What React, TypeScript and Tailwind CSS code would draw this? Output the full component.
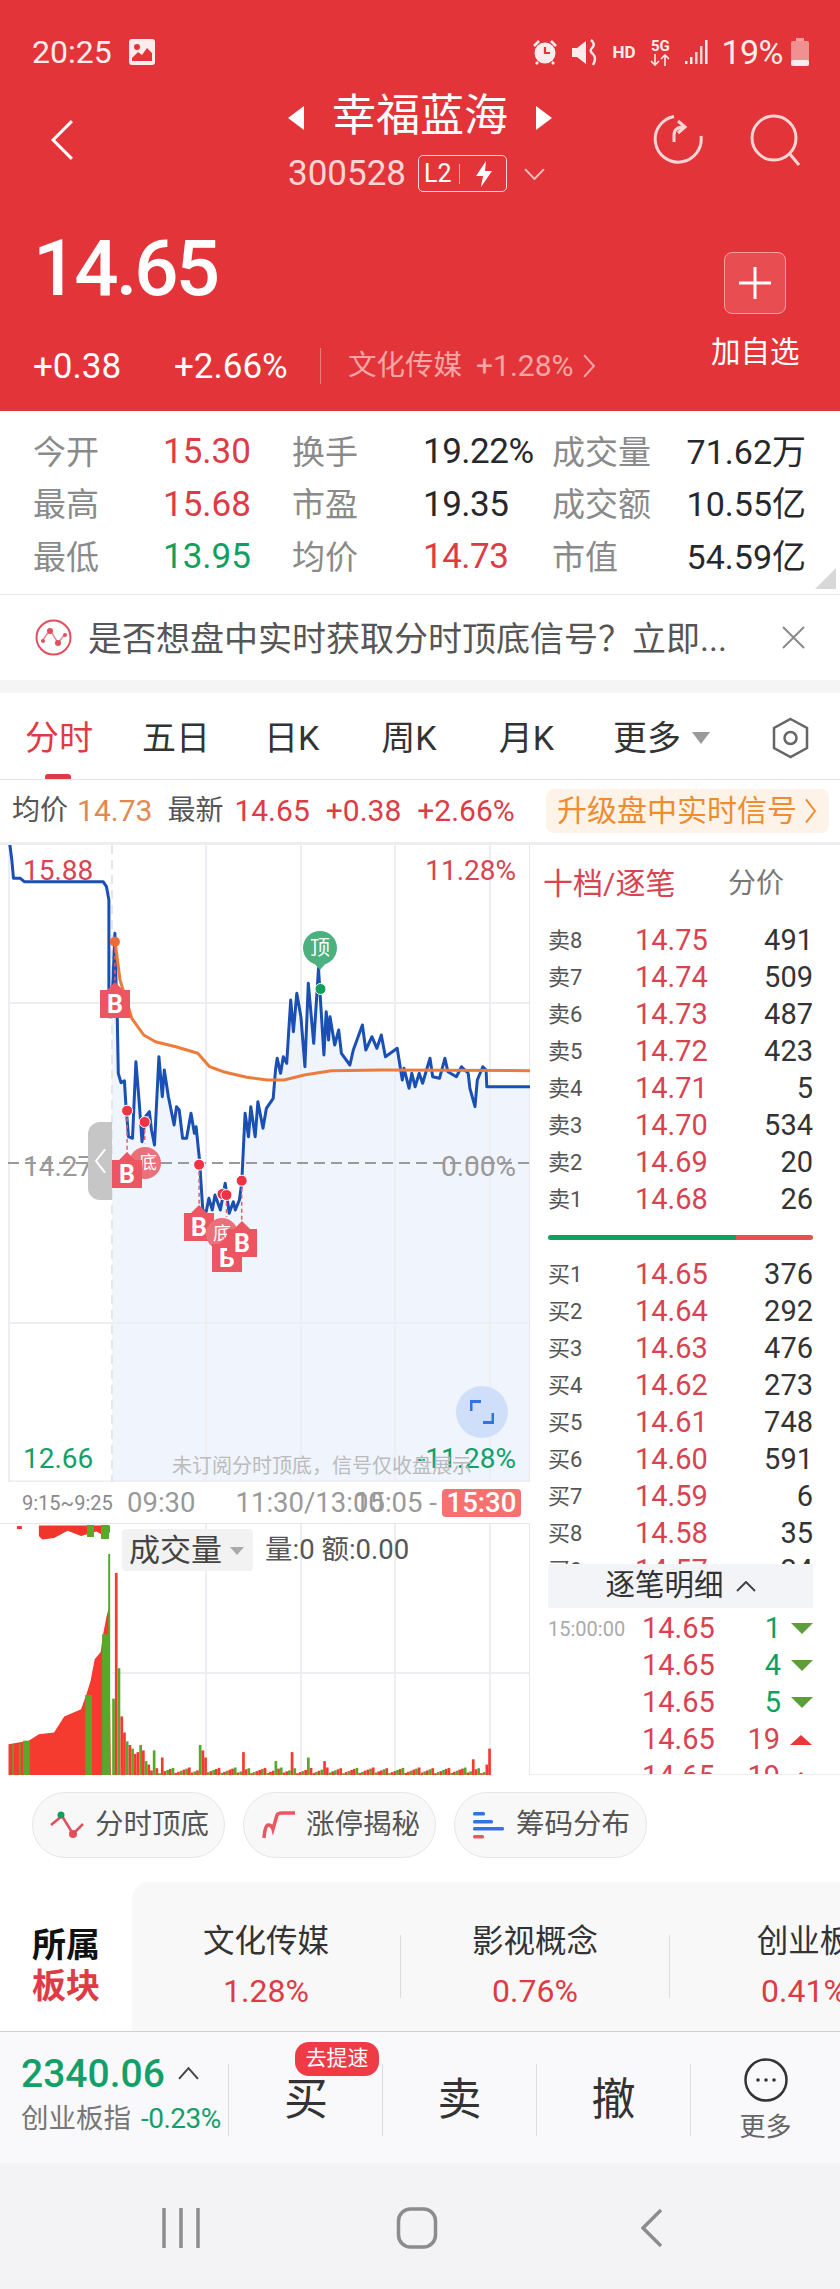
import React from 'react';

// zoomed chart coordinates -> page pixels
const cx = (x: number) => (x / 2.958).toFixed(1);
const cy = (y: number) => (840 + y / 3).toFixed(1);
const vy = (y: number) => (1220 + y / 2.8).toFixed(1);
const pts = (list: number[][]) => list.map(([x, y]) => `${cx(x)},${cy(y)}`).join(' ');
const vpts = (list: number[][]) => list.map(([x, y]) => `${cx(x)},${vy(y)}`).join(' ');

const PRICE_LINE = [
  [28, 5], [35, 60], [40, 115], [60, 115], [72, 125], [305, 125], [315, 140], [322, 180], [322, 530], [330, 530],
  [340, 280], [343, 430], [347, 540], [350, 700], [358, 728], [368, 722], [372, 790], [380, 890], [392, 895], [402, 665],
  [412, 790], [420, 905], [430, 830], [442, 815], [448, 870], [457, 915], [470, 650], [480, 770], [486, 690], [498, 770],
  [515, 855], [522, 800], [530, 810], [540, 895], [552, 895], [565, 820], [575, 880], [580, 860], [590, 960], [600, 1110],
  [610, 1115], [618, 1075], [628, 1110], [636, 1065], [652, 1110], [666, 1030], [678, 1120], [690, 1085], [696, 1110], [708, 1080],
  [715, 1030], [725, 820], [735, 890], [742, 800], [755, 890], [763, 785], [778, 865], [788, 805], [808, 775], [815, 690],
  [820, 655], [830, 700], [838, 650], [848, 670], [860, 480], [868, 575], [878, 460], [890, 530], [902, 680], [912, 430],
  [928, 610], [942, 385], [958, 645], [965, 515], [972, 600], [976, 530], [990, 615], [1002, 570], [1010, 640], [1035, 675],
  [1045, 630], [1072, 555], [1082, 630], [1100, 590], [1115, 625], [1128, 585], [1140, 650], [1175, 625], [1190, 720], [1195, 685],
  [1210, 745], [1218, 700], [1228, 740], [1240, 700], [1250, 730], [1272, 655], [1280, 710], [1300, 715], [1316, 655], [1325, 695],
  [1350, 710], [1365, 680], [1385, 700], [1390, 745], [1405, 800], [1412, 720], [1428, 680], [1438, 690], [1440, 740], [1568, 740],
];
const AVG_LINE = [
  [340, 300], [355, 420], [390, 535], [425, 585], [460, 605], [520, 620], [585, 640], [620, 680], [660, 695], [730, 712],
  [790, 720], [840, 720], [900, 705], [980, 692], [1130, 690], [1568, 692],
];
const AUCTION = [
  [25, 1555], [25, 1468], [85, 1458], [115, 1440], [160, 1435], [190, 1390], [240, 1370], [255, 1330], [268, 1290],
  [280, 1230], [298, 1210], [305, 1160], [315, 1110], [322, 1085], [328, 1555],
];
const AUCTION_TOP = [
  [115, 855], [325, 855], [325, 875], [300, 880], [285, 872], [240, 885], [200, 870], [160, 890], [125, 895], [115, 885],
];
const EARLY_BARS = [215, 567, 300, 165, 120, 95, 85, 75, 60, 65, 85, 70, 40, 30];
const SPIKES: Record<number, number> = {
  15: 70, 18: 50, 32: 85, 33: 70, 34: 50, 48: 65, 60: 40, 66: 65, 72: 50, 78: 40, 133: 45, 138: 30, 139: 75,
};
const VOL_BARS = Array.from({ length: 140 }, (_, i) => ({
  x: 332 + i * 8,
  h: i < EARLY_BARS.length ? EARLY_BARS[i] : SPIKES[i] ?? 6 + ((i * 37) % 17),
  up: (i * 13) % 5 >= 2,
}));

const MARKER_LINES = [
  [340, 305, 450], [376, 812, 950], [428, 846, 910], [589, 974, 1120], [670, 1065, 1130], [715, 1022, 1160],
];
const RED_DOTS = [[376, 812], [428, 846], [589, 974], [658, 1062], [670, 1065], [715, 1022]];

const SELLS = [
  ['卖8', '14.75', '491'], ['卖7', '14.74', '509'], ['卖6', '14.73', '487'], ['卖5', '14.72', '423'],
  ['卖4', '14.71', '5'], ['卖3', '14.70', '534'], ['卖2', '14.69', '20'], ['卖1', '14.68', '26'],
];
const BUYS = [
  ['买1', '14.65', '376'], ['买2', '14.64', '292'], ['买3', '14.63', '476'], ['买4', '14.62', '273'], ['买5', '14.61', '748'],
  ['买6', '14.60', '591'], ['买7', '14.59', '6'], ['买8', '14.58', '35'], ['买9', '14.57', '24'],
];
const TICKS = [
  { time: '15:00:00', vol: '1', up: false },
  { time: '', vol: '4', up: false },
  { time: '', vol: '5', up: false },
  { time: '', vol: '19', up: true },
  { time: '', vol: '19', up: true },
];
const STATS = [
  ['今开', '15.30', 'text-[#DE3B45]', '换手', '19.22%', 'text-[#26282C]', '成交量', '71.62万'],
  ['最高', '15.68', 'text-[#DE3B45]', '市盈', '19.35', 'text-[#26282C]', '成交额', '10.55亿'],
  ['最低', '13.95', 'text-[#0FA060]', '均价', '14.73', 'text-[#DE3B45]', '市值', '54.59亿'],
];

function BTag({ className }: { className: string }) {
  return (
    <div className={`absolute flex h-[28px] w-[30px] items-center justify-center bg-[#EC5562] text-[25px] font-bold leading-none text-white ${className}`}>
      <span className="absolute -top-[8px] left-[7px] h-0 w-0 border-x-[8px] border-b-[8px] border-x-transparent border-b-[#EC5562]" />
      B
    </div>
  );
}

function OrderRow({ row }: { row: string[] }) {
  return (
    <div className="flex h-[37px] shrink-0 items-center">
      <span className="w-[87px] text-[22px] text-[#555]">{row[0]}</span>
      <span className="text-[29px] text-[#D94350]">{row[1]}</span>
      <span className="flex-1 text-right text-[29px] text-[#333]">{row[2]}</span>
    </div>
  );
}

function Chevron({ className, dir = 'left', color = 'white', sw = 3 }: { className: string; dir?: string; color?: string; sw?: number }) {
  const points = dir === 'left' ? '20,2 2,20 20,38' : dir === 'right' ? '2,2 20,20 2,38' : dir === 'up' ? '2,20 20,2 38,20' : '2,2 20,20 38,2';
  const box = dir === 'left' || dir === 'right' ? '0 0 22 40' : '0 0 40 22';
  return (
    <svg className={className} viewBox={box} preserveAspectRatio="none" fill="none">
      <polyline points={points} stroke={color} strokeWidth={sw} vectorEffect="non-scaling-stroke" />
    </svg>
  );
}

function StatusIcons() {
  return (
    <div className="flex items-center">
      <svg className="ml-0 h-[26px] w-[26px]" viewBox="0 0 26 26">
        <circle cx="13" cy="14" r="10.5" fill="#FDECEC" />
        <path d="M2 7 L7 2 M24 7 L19 2 M6 23 L4 25 M20 23 L22 25" stroke="#FDECEC" strokeWidth="2.5" />
        <path d="M13 8 V14 H18" stroke="#E33539" strokeWidth="2.2" fill="none" />
      </svg>
      <svg className="ml-[13px] h-[27px] w-[27px]" viewBox="0 0 27 27">
        <path d="M1 9 H6 L15 2 V25 L6 18 H1 Z" fill="#FDECEC" />
        <path d="M20 1 Q25 5 21 9 Q18 12 22 15 Q26 19 22 26" stroke="#FDECEC" strokeWidth="2.4" fill="none" />
      </svg>
      <span className="ml-[14px] w-[24px] text-[17px] font-bold leading-none text-[#FDECEC]">HD</span>
      <div className="ml-[12px] flex w-[24px] flex-col items-center">
        <span className="text-[15px] font-bold leading-[15px] text-[#FDECEC]">5G</span>
        <svg className="h-[12px] w-[22px]" viewBox="0 0 22 12" fill="none" stroke="#FDECEC" strokeWidth="1.6">
          <path d="M6 0 V11 M2 7 L6 11 L10 7 M16 12 V1 M12 5 L16 1 L20 5" />
        </svg>
      </div>
      <svg className="ml-[13px] h-[26px] w-[24px]" viewBox="0 0 24 26" fill="#FDECEC">
        <rect x="0" y="22" width="2.5" height="3" />
        <rect x="5" y="18" width="2.5" height="7" />
        <rect x="10" y="13" width="2.5" height="12" opacity="0.85" />
        <rect x="15" y="7" width="2.5" height="18" opacity="0.85" />
        <rect x="20" y="1" width="2.5" height="24" />
      </svg>
      <span className="ml-[12px] text-[34px] leading-none tracking-[-0.5px] text-[#FDECEC]">19%</span>
      <svg className="ml-[8px] h-[28px] w-[18px]" viewBox="0 0 18 28">
        <rect x="5" y="0" width="8" height="3" fill="#F0A0A0" />
        <rect x="0" y="3" width="18" height="25" rx="2" fill="#F09090" />
        <rect x="0" y="22" width="18" height="6" rx="2" fill="#FDECEC" />
      </svg>
    </div>
  );
}

function Header() {
  return (
    <header className="h-[411px] shrink-0 bg-[#E33539] text-white">
      <div className="flex h-[104px] items-center justify-between pl-[32px] pr-[31px]">
        <div className="flex items-center">
          <span className="text-[32px] leading-none text-[#FDECEC]">20:25</span>
          <svg className="ml-[17px] h-[26px] w-[26px]" viewBox="0 0 26 26">
            <rect width="26" height="26" rx="3" fill="#FDECEC" />
            <circle cx="8" cy="8" r="3" fill="#E33539" />
            <path d="M3 22 L3 19 L9 13 L13 16 L18 9 L23 14 L23 22 Z" fill="#E33539" />
          </svg>
        </div>
        <StatusIcons />
      </div>
      <div className="flex h-[96px] items-start">
        <div className="flex w-[288px] pl-[51px] pt-[15px]">
          <Chevron className="h-[42px] w-[23px]" sw={3} />
        </div>
        <div className="flex w-[264px] flex-col items-center">
          <div className="flex h-[26px] w-full items-center justify-between leading-none">
            <svg className="mt-[2px] h-[24px] w-[16px]" viewBox="0 0 16 24"><path d="M16 0 V24 L0 12 Z" fill="white" /></svg>
            <span className="-mt-[2px] text-[44px] leading-none">幸福蓝海</span>
            <svg className="mt-[2px] h-[24px] w-[16px]" viewBox="0 0 16 24"><path d="M0 0 V24 L16 12 Z" fill="white" /></svg>
          </div>
          <div className="mt-[25px] flex w-full items-center">
            <span className="text-[35px] leading-none text-[#FBD5D5]">300528</span>
            <div className="ml-[12px] flex h-[37px] w-[89px] items-center rounded-[5px] border border-[#FBD5D5] pl-[5px]">
              <span className="w-[35px] text-[25px] leading-none">L2</span>
              <span className="h-[20px] w-px bg-[#F6B5B5]" />
              <svg className="ml-[15px] h-[26px] w-[18px]" viewBox="0 0 18 26"><path d="M11 0 L1 15 H8 L6 26 L17 10 H10 Z" fill="white" /></svg>
            </div>
            <Chevron dir="down" color="#F9BDBD" sw={2} className="ml-[17px] h-[12px] w-[21px]" />
          </div>
        </div>
        <div className="flex flex-1 pl-[100px] pt-[10px]">
          <svg className="h-[50px] w-[52px]" viewBox="0 0 52 50" fill="none" stroke="#FBD5D5" strokeWidth="3">
            <path d="M22 2.5 A23 23 0 1 0 49 22" />
            <path d="M22 28 V21 Q22 13 32 13 M26 7 L33 13 L26 19" />
          </svg>
          <svg className="ml-[46px] h-[52px] w-[52px]" viewBox="0 0 52 52" fill="none" stroke="#FBD5D5" strokeWidth="3">
            <circle cx="24" cy="24" r="22" />
            <path d="M39 39 L49 51" />
          </svg>
        </div>
      </div>
      <div className="flex h-[211px]">
        <div className="w-[724px] pl-[33px]">
          <div className="mt-[26px] text-[78px] font-medium leading-[86px] tracking-[-3px]">14.65</div>
          <div className="mt-[36px] flex h-[36px] items-center">
            <span className="w-[141px] text-[35px] leading-none">+0.38</span>
            <span className="w-[146px] text-[35px] leading-none">+2.66%</span>
            <span className="h-[36px] w-px bg-[#EE7A7C]" />
            <span className="ml-[27px] text-[28.5px] leading-none text-[#F6A6A6]">文化传媒</span>
            <span className="ml-[14px] text-[30px] leading-none text-[#F6A6A6]">+1.28%</span>
            <Chevron dir="right" color="#F6A6A6" sw={2} className="ml-[9px] h-[24px] w-[12px]" />
          </div>
        </div>
        <div className="flex flex-1 flex-col pt-[52px]">
          <div className="flex h-[62px] w-[62px] items-center justify-center rounded-[8px] border border-[#F2A0A2] bg-[#E74D51]">
            <svg className="h-[32px] w-[32px]" viewBox="0 0 32 32"><path d="M16 0 V32 M0 16 H32" stroke="white" strokeWidth="3" /></svg>
          </div>
          <span className="-ml-[13px] mt-[24px] whitespace-nowrap text-[29.5px] leading-none">加自选</span>
        </div>
      </div>
    </header>
  );
}

function Stats() {
  return (
    <section className="relative h-[184px] shrink-0 border-b border-[#E8E8E8] pt-[15px]">
      {STATS.map((r) => (
        <div key={r[0]} className="flex h-[52.5px] items-center pl-[33px] pr-[34px]">
          <span className="w-[130px] text-[33px] text-[#8A8A8A]">{r[0]}</span>
          <span className={`w-[129px] text-[35px] ${r[2]}`}>{r[1]}</span>
          <span className="w-[131px] text-[33px] text-[#8A8A8A]">{r[3]}</span>
          <span className={`w-[129px] whitespace-nowrap text-[35px] tracking-[-0.5px] ${r[5]}`}>{r[4]}</span>
          <span className="w-[110px] text-[33px] text-[#8A8A8A]">{r[6]}</span>
          <span className="flex-1 whitespace-nowrap text-right text-[34px] text-[#26282C]">{r[7]}</span>
        </div>
      ))}
      <span className="absolute bottom-[5px] right-[4px] h-0 w-0 border-b-[21px] border-l-[21px] border-b-[#D8D8D8] border-l-transparent" />
    </section>
  );
}

function Banner() {
  return (
    <section className="flex h-[85px] shrink-0 items-center pl-[35px] pr-[35px]">
      <svg className="h-[37px] w-[37px]" viewBox="0 0 37 37" fill="none">
        <circle cx="18.5" cy="18.5" r="17" stroke="#E0505C" strokeWidth="2" />
        <path d="M7 22 L15 11 L23 24 L30 15" stroke="#E98A92" strokeWidth="1.5" />
        <circle cx="15" cy="12" r="3" fill="#E0505C" />
        <circle cx="23" cy="24" r="3" fill="#E0505C" />
        <circle cx="8" cy="22" r="2" fill="#E0505C" />
        <circle cx="30" cy="16" r="2" fill="#E0505C" />
      </svg>
      <span className="ml-[16px] mt-[3px] flex-1 whitespace-nowrap text-[34px] leading-none text-[#555]">是否想盘中实时获取分时顶底信号？立即...</span>
      <svg className="h-[23px] w-[23px]" viewBox="0 0 23 23"><path d="M1 1 L22 22 M22 1 L1 22" stroke="#8A8A8A" strokeWidth="2" /></svg>
    </section>
  );
}

function Tabs() {
  return (
    <nav className="relative flex h-[87px] shrink-0 items-center border-b border-[#E4E4E4] pt-[3px] text-[34px] leading-none text-[#333]">
      <span className="ml-[25px] text-[#DE3B45]">分时</span>
      <span className="ml-[49px]">五日</span>
      <span className="ml-[54px]">日K</span>
      <span className="ml-[62px]">周K</span>
      <span className="ml-[62px]">月K</span>
      <span className="ml-[59px]">更多</span>
      <span className="ml-[11px] h-0 w-0 border-x-[9px] border-t-[12px] border-x-transparent border-t-[#9A9A9A]" />
      <svg className="ml-[62px] h-[42px] w-[37px]" viewBox="0 0 37 42" fill="none" stroke="#666" strokeWidth="2.5">
        <path d="M18.5 2 L35 11 V31 L18.5 40 L2 31 V11 Z" />
        <circle cx="18.5" cy="21" r="6" />
      </svg>
      <span className="absolute bottom-0 left-[45px] h-[5px] w-[26px] rounded-t-[3px] bg-[#DE3B45]" />
    </nav>
  );
}

function InfoRow() {
  return (
    <div className="flex h-[62px] shrink-0 items-center pl-[12px] text-[30px] leading-none">
      <span className="text-[28px] text-[#555]">均价</span>
      <span className="ml-[9px] text-[#E08A50]">14.73</span>
      <span className="ml-[15px] text-[28px] text-[#555]">最新</span>
      <span className="ml-[11px] text-[#DE3B45]">14.65</span>
      <span className="ml-[16px] text-[#DE3B45]">+0.38</span>
      <span className="ml-[16px] text-[#DE3B45]">+2.66%</span>
      <div className="ml-auto mr-[11px] flex h-[44px] w-[283px] items-center rounded-[8px] bg-[#FEF3E9] pl-[11px]">
        <span className="text-[30px] leading-none text-[#EF8C2E]">升级盘中实时信号</span>
        <Chevron dir="right" color="#EF8C2E" sw={2} className="ml-[8px] h-[26px] w-[11px]" />
      </div>
    </div>
  );
}

function PriceChart() {
  const fill = PRICE_LINE.filter(([x]) => x >= 330);
  return (
    <div className="relative h-[640px] shrink-0 overflow-hidden border-t-[3px] border-[#EEEEEE] text-[28px] leading-none">
      <svg className="absolute inset-0 h-full w-full" viewBox="0 845 530 637" preserveAspectRatio="none">
        <polygon points={`112,1482 ${pts(fill)} 530,1482`} fill="#EFF4FD" />
        <g stroke="#ECEEF2" strokeWidth="2">
          <path d="M9 845 V1482 M206 845 V1482 M301 845 V1482 M395 845 V1482 M490 845 V1482" />
          <path d="M9 1003 H530 M9 1323 H530" />
          <path d="M8 1482 H530" strokeWidth="3" />
        </g>
        <path d="M529.5 845 V1482" stroke="#E8E8E8" strokeWidth="1" />
        <path d="M112 845 V1482" stroke="#E6E6E6" strokeWidth="2" strokeDasharray="9 6" />
        <path d="M8 1163 H530" stroke="#9A9A9A" strokeWidth="2" strokeDasharray="11 6" />
      </svg>
      <span className="absolute left-[23px] top-[12px] text-[#D94350]">15.88</span>
      <span className="absolute right-[14px] top-[12px] text-[#D94350]">11.28%</span>
      <span className="absolute left-[23px] top-[308px] text-[#999]">14.27</span>
      <span className="absolute right-[14px] top-[308px] text-[#999]">0.00%</span>
      <span className="absolute left-[23px] top-[600px] text-[#13A068]">12.66</span>
      <span className="absolute right-[14px] top-[600px] text-[#13A068]">-11.28%</span>
      <svg className="absolute inset-0 h-full w-full" viewBox="0 845 530 637" preserveAspectRatio="none">
        <polyline points={pts(PRICE_LINE)} fill="none" stroke="#1A4FB4" strokeWidth="3" strokeLinejoin="round" />
        <polyline points={pts(AVG_LINE)} fill="none" stroke="#EE7B3A" strokeWidth="3" strokeLinejoin="round" />
        {MARKER_LINES.map(([x, y1, y2]) => (
          <line key={x} x1={cx(x)} x2={cx(x)} y1={cy(y1)} y2={cy(y2)} stroke="#E85A6A" strokeWidth="1.5" strokeDasharray="4 3" />
        ))}
        {RED_DOTS.map(([x, y]) => (
          <circle key={x} cx={cx(x)} cy={cy(y)} r="5.5" fill="#EE3344" stroke="white" strokeWidth="1" />
        ))}
        <circle cx={cx(340)} cy={cy(305)} r="5" fill="#EE6A3A" />
        <circle cx={cx(948)} cy={cy(447)} r="5.5" fill="#0FA060" stroke="white" strokeWidth="1" />
      </svg>

      <BTag className="left-[100px] top-[145px]" />
      <span className="absolute left-[129px] top-[302px] flex h-[32px] w-[32px] items-center justify-center rounded-full bg-[#EC7079] pl-[6px] text-[18px] text-white">底</span>
      <BTag className="left-[112px] top-[315px]" />
      <BTag className="left-[184px] top-[368px]" />
      <span className="absolute left-[206px] top-[373px] flex h-[32px] w-[32px] items-center justify-center rounded-full bg-[#EC7079] text-[18px] text-white">底</span>
      <BTag className="left-[212px] top-[399px]" />
      <BTag className="left-[227px] top-[384px]" />

      <div className="absolute left-[303px] top-[86px] flex h-[34px] w-[34px] items-center justify-center rounded-full bg-[#4CB07F] text-[20px] text-white">
        顶
        <span className="absolute -bottom-[5px] left-[11px] h-0 w-0 border-x-[6px] border-t-[7px] border-x-transparent border-t-[#4CB07F]" />
      </div>
      <div className="absolute left-[88px] top-[277px] flex h-[78px] w-[24px] items-center justify-center rounded-l-[12px] bg-[#C6C6C6]">
        <Chevron sw={2} className="h-[26px] w-[11px]" />
      </div>
      <span className="absolute left-[172px] top-[611px] whitespace-nowrap text-[20px] text-[#BBB]">未订阅分时顶底，信号仅收盘展示</span>
      <div className="absolute left-[456px] top-[541px] flex h-[52px] w-[52px] items-center justify-center rounded-full bg-[#CFDFF9]">
        <svg className="h-[24px] w-[24px]" viewBox="0 0 24 24" fill="none" stroke="#2F74E0" strokeWidth="3">
          <path d="M1 11 V1.5 H11 M23 13 V22.5 H13" />
        </svg>
      </div>
    </div>
  );
}

function TimeAxis() {
  return (
    <div className="relative flex h-[42px] shrink-0 items-center border-b border-[#E8E8E8] text-[27.5px] leading-none text-[#999]">
      <span className="ml-[22px] w-[105px] text-[20px] text-[#8A8A8A]">9:15~9:25</span>
      <span>09:30</span>
      <span className="ml-[40px]">11:30/13:00</span>
      <span className="absolute left-[354px]">15:05 -</span>
      <span className="absolute left-[442px] top-[7px] flex h-[28px] w-[79px] items-center justify-center rounded-[4px] bg-[#F87171] font-medium text-white">15:30</span>
    </div>
  );
}

function VolumeChart() {
  return (
    <div className="relative h-[251px] shrink-0">
      <svg className="absolute inset-0 h-full w-full" viewBox="0 1524 530 251" preserveAspectRatio="none">
        <path d="M206 1524 V1775 M301 1524 V1775 M395 1524 V1775 M490 1524 V1775 M112 1673 H530" stroke="#ECEEF2" strokeWidth="2" />
        <path d="M529.5 1524 V1775" stroke="#E8E8E8" strokeWidth="1" />
        <rect x={cx(50)} y={vy(857)} width="5" height="3" fill="#F0352B" />
        <polygon points={vpts(AUCTION_TOP)} fill="#F0352B" />
        <rect x="87" y="1525" width="7" height="12" fill="#58A82C" />
        <rect x="101" y="1525" width="8" height="14" fill="#58A82C" />
        <polygon points={vpts(AUCTION)} fill="#F53A30" />
        {[[36, 5, 1468], [56, 5, 1468], [68, 20, 1458], [252, 20, 1330], [302, 22, 1160], [320, 6, 935]].map(([x, w, top]) => (
          <rect key={x} x={cx(x)} y={vy(top)} width={(w / 2.958).toFixed(1)} height={((1555 - top) / 2.8).toFixed(1)} fill="#58A82C" />
        ))}
        {VOL_BARS.map((b) => (
          <rect key={b.x} x={cx(b.x)} y={vy(1555 - b.h)} width="2.7" height={(b.h / 2.8).toFixed(1)} fill={b.up ? '#F53A30' : '#58A82C'} />
        ))}
      </svg>
      <div className="absolute left-[122px] top-[5px] flex h-[42px] w-[131px] items-center rounded-[4px] bg-[#F2F2F2] pl-[7px]">
        <span className="text-[31px] leading-none text-[#444]">成交量</span>
        <span className="ml-[8px] mt-[2px] h-0 w-0 border-x-[7px] border-t-[8px] border-x-transparent border-t-[#AAA]" />
      </div>
      <span className="absolute left-[265px] top-[10px] whitespace-nowrap text-[27.5px] leading-[32px] text-[#555]">量:0 额:0.00</span>
    </div>
  );
}

function OrderBook() {
  return (
    <aside className="flex h-[933px] w-[310px] shrink-0 flex-col overflow-hidden border-b border-t-[3px] border-[#EEEEEE] pl-[18px] pr-[27px]">
      <div className="flex h-[77px] shrink-0 items-center justify-between pr-[29px] leading-none">
        <span className="-ml-[5px] text-[30px] text-[#D94350]">十档/逐笔</span>
        <span className="text-[28px] text-[#777]">分价</span>
      </div>
      {SELLS.map((r) => <OrderRow key={r[0]} row={r} />)}
      <div className="flex h-[38px] shrink-0 items-center">
        <div className="h-[5px] w-[188px] rounded-l-full bg-[#0FA060]" />
        <div className="h-[5px] flex-1 rounded-r-full bg-[#E65050]" />
      </div>
      <div className="h-[308px] shrink-0 overflow-hidden">
        {BUYS.map((r) => <OrderRow key={r[0]} row={r} />)}
      </div>
      <div className="flex h-[44px] shrink-0 items-center justify-center bg-[#F2F4F8]">
        <span className="text-[29.5px] leading-none text-[#333]">逐笔明细</span>
        <Chevron dir="up" color="#444" sw={2} className="ml-[12px] h-[11px] w-[20px]" />
      </div>
      <div className="flex-1 overflow-hidden pt-[2px]">
        {TICKS.map((t, i) => (
          <div key={i} className="flex h-[37px] items-center">
            <span className="w-[94px] text-[20px] text-[#AAA]">{t.time}</span>
            <span className="text-[29px] text-[#D94350]">14.65</span>
            <span className={`flex-1 text-right text-[29px] ${t.up ? 'text-[#D94350]' : 'text-[#0FA060]'}`}>{t.vol}</span>
            {t.up ? (
              <span className="ml-[10px] mr-[1px] h-0 w-0 border-x-[11px] border-b-[10px] border-x-transparent border-b-[#F0353A]" />
            ) : (
              <span className="ml-[10px] mr-[0px] h-0 w-0 border-x-[11.5px] border-t-[11px] border-x-transparent border-t-[#5D9E3A]" />
            )}
          </div>
        ))}
      </div>
    </aside>
  );
}

function Chips() {
  return (
    <div className="flex h-[107px] shrink-0 items-start gap-[18px] pl-[32px] pt-[17px]">
      <div className="flex h-[66px] w-[193px] items-center rounded-[33px] border border-[#E6E6E6] bg-[#F8F8F8] pl-[17px]">
        <svg className="h-[28px] w-[34px]" viewBox="0 0 34 28" fill="none">
          <path d="M1 14 L12 5 L23 23 L33 13" stroke="#E0505C" strokeWidth="2.5" />
          <circle cx="11" cy="4" r="3.5" fill="#0FA060" />
          <circle cx="23" cy="23" r="4" fill="#E0505C" />
        </svg>
        <span className="ml-[11px] text-[28.5px] leading-none text-[#555]">分时顶底</span>
      </div>
      <div className="flex h-[66px] w-[193px] items-center rounded-[33px] border border-[#E6E6E6] bg-[#F8F8F8] pl-[18px]">
        <svg className="h-[28px] w-[34px]" viewBox="0 0 34 28" fill="none">
          <path d="M2 27 Q3 14 6 14 Q10 14 11 18 L15 4 Q16 2 20 2 H33" stroke="#EC5562" strokeWidth="3.5" />
        </svg>
        <span className="ml-[10px] text-[28.5px] leading-none text-[#555]">涨停揭秘</span>
      </div>
      <div className="flex h-[66px] w-[193px] items-center rounded-[33px] border border-[#E6E6E6] bg-[#F8F8F8] pl-[18px]">
        <svg className="h-[28px] w-[32px]" viewBox="0 0 32 28">
          <rect x="0" y="1" width="12" height="3.5" rx="1.5" fill="#2F74E0" />
          <rect x="0" y="9" width="20" height="3.5" rx="1.5" fill="#2F74E0" />
          <rect x="0" y="16" width="31" height="3.5" rx="1.5" fill="#2F74E0" />
          <rect x="0" y="24" width="11" height="3.5" rx="1.5" fill="#EC5562" />
        </svg>
        <span className="ml-[11px] text-[28.5px] leading-none text-[#555]">筹码分布</span>
      </div>
    </div>
  );
}

function Sectors() {
  const items = [
    ['文化传媒', '1.28%'],
    ['影视概念', '0.76%'],
    ['创业板', '0.41%'],
  ];
  return (
    <section className="flex h-[149px] shrink-0">
      <div className="flex w-[132px] flex-col pl-[32px] pt-[43px] text-[34px] font-bold leading-[41px]">
        <span className="text-[#111]">所属</span>
        <span className="text-[#DE3B45]">板块</span>
      </div>
      <div className="flex flex-1 items-center overflow-hidden rounded-tl-[16px] bg-[#F8F8F8] pt-[20px]">
        {items.map((it, i) => (
          <React.Fragment key={it[0]}>
            <div className="flex w-[268px] shrink-0 flex-col items-center leading-none">
              <span className="whitespace-nowrap text-[31.5px] text-[#333]">{it[0]}</span>
              <span className="mt-[18px] text-[32px] text-[#DE3B45]">{it[1]}</span>
            </div>
            {i < 2 && <span className="h-[63px] w-px shrink-0 bg-[#DDD]" />}
          </React.Fragment>
        ))}
      </div>
    </section>
  );
}

function TradeBar() {
  return (
    <footer className="flex h-[132px] shrink-0 items-center border-t border-[#D0D0D0] bg-[#F9F9FB] pt-[4px]">
      <div className="flex h-[72px] w-[228px] shrink-0 flex-col pl-[21px]">
        <div className="flex items-center">
          <span className="-mt-[14px] text-[39px] font-medium leading-[48px] text-[#13A068]">2340.06</span>
          <Chevron dir="up" color="#444" sw={2} className="-mt-[14px] ml-[13px] h-[13px] w-[21px]" />
        </div>
        <div className="mt-[7px] flex items-center whitespace-nowrap leading-none">
          <span className="text-[27.5px] text-[#777]">创业板指</span>
          <span className="ml-[10px] text-[28px] tracking-[-0.5px] text-[#13A068]">-0.23%</span>
        </div>
      </div>
      <span className="h-[72px] w-px shrink-0 bg-[#DDD]" />
      <div className="relative flex h-[72px] w-[153px] shrink-0 items-center justify-center pl-[1px]">
        <span className="text-[44px] leading-none text-[#333]">买</span>
        <span className="absolute left-[66px] -top-[22px] flex h-[34px] w-[84px] items-center justify-center rounded-[14px] bg-[#EE3B45] text-[21px] leading-none text-white">去提速</span>
      </div>
      <span className="h-[72px] w-px shrink-0 bg-[#DDD]" />
      <div className="flex h-[72px] w-[153px] shrink-0 items-center justify-center text-[44px] leading-none text-[#333]">卖</div>
      <span className="h-[72px] w-px shrink-0 bg-[#DDD]" />
      <div className="flex h-[72px] w-[153px] shrink-0 items-center justify-center text-[44px] leading-none text-[#333]">撤</div>
      <span className="h-[72px] w-px shrink-0 bg-[#DDD]" />
      <div className="-mt-[1px] flex flex-1 flex-col items-center">
        <svg className="h-[44px] w-[44px]" viewBox="0 0 44 44">
          <circle cx="22" cy="22" r="20.5" fill="none" stroke="#333" strokeWidth="2.5" />
          <circle cx="14" cy="22" r="1.8" fill="#333" />
          <circle cx="22" cy="22" r="1.8" fill="#333" />
          <circle cx="30" cy="22" r="1.8" fill="#333" />
        </svg>
        <span className="mt-[12px] text-[26px] leading-none text-[#666]">更多</span>
      </div>
    </footer>
  );
}

function NavBar() {
  return (
    <div className="flex flex-1 items-center bg-[#F3F3F5] pt-[3px]">
      <svg className="ml-[161px] h-[40px] w-[40px]" viewBox="0 0 40 40">
        <path d="M3 0 V40 M20 0 V40 M37 0 V40" stroke="#8C8C8C" strokeWidth="3.5" />
      </svg>
      <svg className="ml-[195px] h-[42px] w-[42px]" viewBox="0 0 42 42">
        <rect x="2.5" y="2" width="37" height="38" rx="12" fill="none" stroke="#8C8C8C" strokeWidth="3.5" />
      </svg>
      <Chevron color="#8C8C8C" sw={3.5} className="ml-[203px] h-[40px] w-[22px]" />
    </div>
  );
}

export default function App() {
  return (
    <div className="flex h-[2289px] w-[840px] flex-col overflow-hidden bg-white font-[family-name:Roboto,'Noto_Sans_CJK_SC',sans-serif]">
      <Header />
      <Stats />
      <Banner />
      <div className="h-[13px] shrink-0 bg-[#F5F5F5]" />
      <Tabs />
      <InfoRow />
      <div className="flex shrink-0">
        <div className="flex w-[530px] shrink-0 flex-col">
          <PriceChart />
          <TimeAxis />
          <VolumeChart />
        </div>
        <OrderBook />
      </div>
      <Chips />
      <Sectors />
      <TradeBar />
      <NavBar />
    </div>
  );
}
